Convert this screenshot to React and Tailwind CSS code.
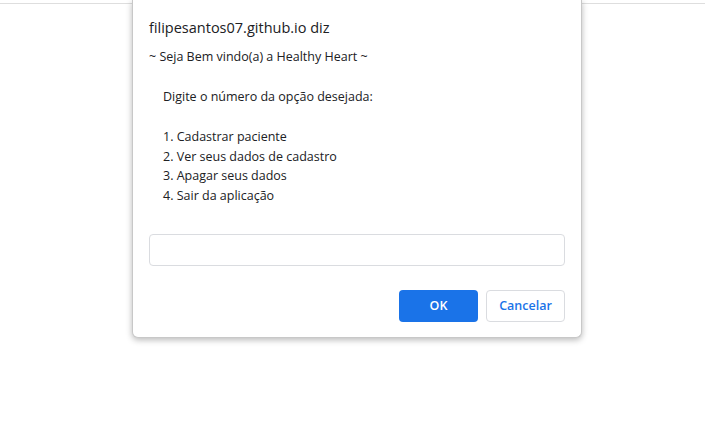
import React, { useState } from "react";

const App = () => {
  const [value, setValue] = useState("");

  return (
    <div
      className="relative w-[705px] h-[431px] bg-white overflow-hidden"
      style={{ fontFamily: '"Open Sans", "Noto Sans", sans-serif' }}
    >
      <div className="h-[4px] border-b border-[#dedede]"></div>

      {/* the browser's prompt() dialog lies over the page */}
      <div className="absolute left-[132px] top-0 w-[450px] h-[338px] bg-white border-x border-b border-[#c8c8c8] rounded-b-[6px] shadow-[0_2px_6px_rgba(0,0,0,0.28)] pl-[16px] pr-[16px] text-[#202124]">
        <div className="pt-[18px] text-[14.5px] leading-[20px]">filipesantos07.github.io diz</div>
        <div className="mt-[9px] text-[12.5px] leading-[19.9px]">
          <div>~ Seja Bem vindo(a) a Healthy Heart ~</div>
          <div className="h-[19.9px]"></div>
          <div className="pl-[14px]">Digite o número da opção desejada:</div>
          <div className="h-[19.9px]"></div>
          <div className="pl-[14px]">1. Cadastrar paciente</div>
          <div className="pl-[14px]">2. Ver seus dados de cadastro</div>
          <div className="pl-[14px]">3. Apagar seus dados</div>
          <div className="pl-[14px]">4. Sair da aplicação</div>
        </div>
        <input
          value={value}
          onChange={(e) => setValue(e.target.value)}
          className="mt-[28px] block w-[416px] h-[32px] border border-[#dadce0] rounded-[4px] px-2 text-[13px] outline-none"
        />
        <div className="mt-[24px] flex justify-end gap-[8px]">
          <button className="w-[79px] h-[32px] rounded-[4px] bg-[#1a73e8] text-white text-[12.5px] font-semibold">
            OK
          </button>
          <button className="w-[79px] h-[32px] rounded-[4px] border border-[#dadce0] bg-white text-[#1a73e8] text-[12.5px] font-semibold">
            Cancelar
          </button>
        </div>
      </div>
    </div>
  );
};

export default App;
